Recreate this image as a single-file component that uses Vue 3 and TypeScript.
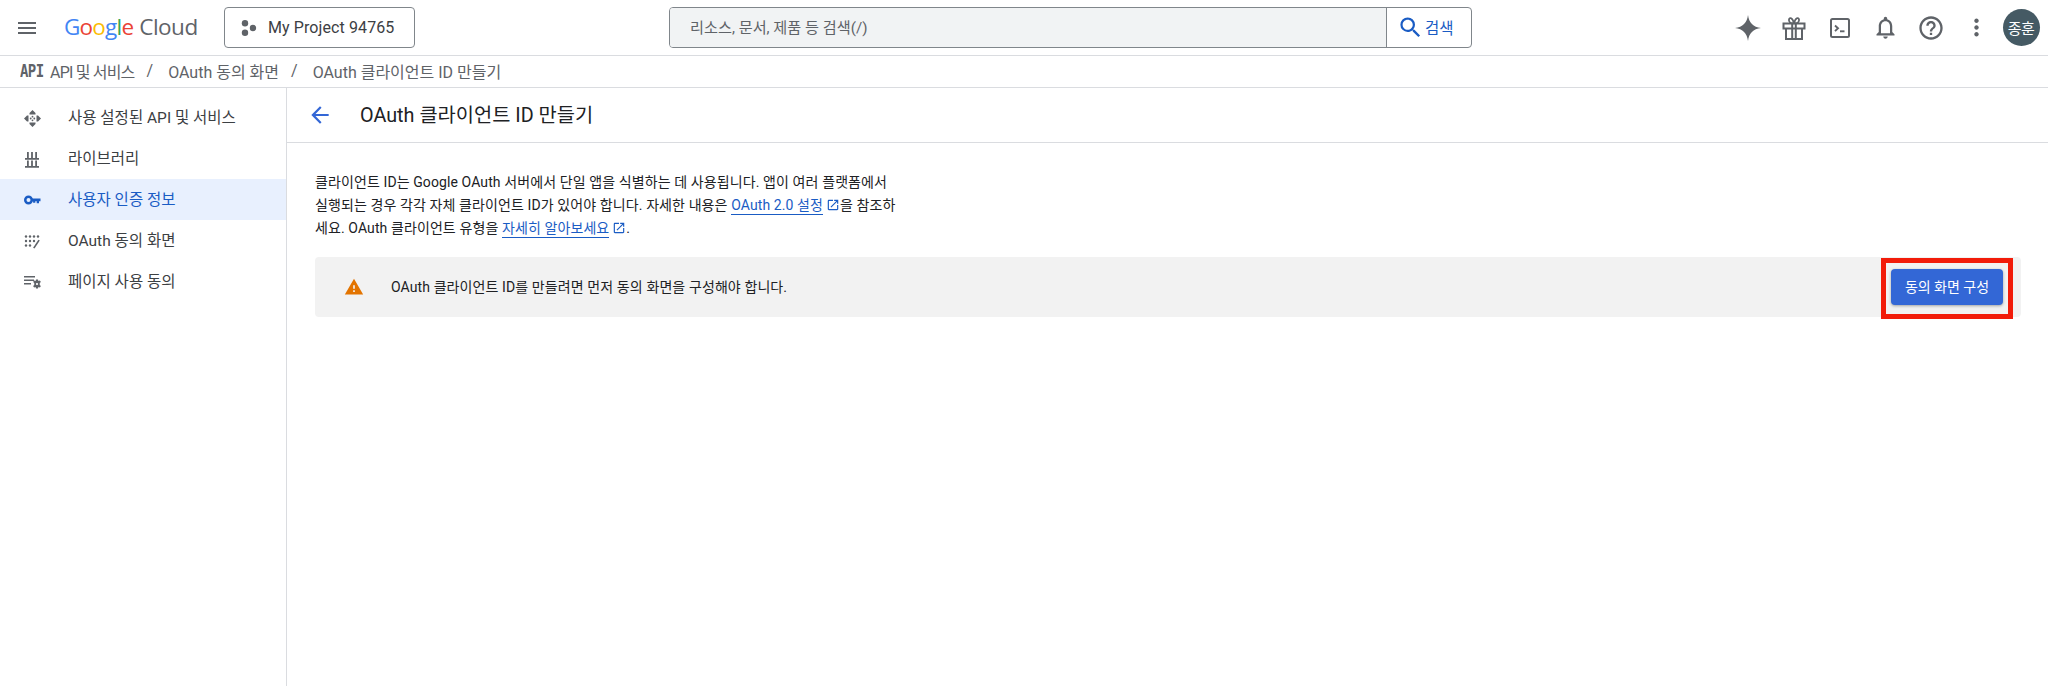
<template>
  <div class="page">
    <header class="topbar">
      <button class="icon-btn menu" aria-label="menu">
        <svg width="24" height="24" viewBox="0 0 24 24"><path d="M3 18h18v-2H3v2zm0-5h18v-2H3v2zm0-7v2h18V6H3z" fill="#5f6368"/></svg>
      </button>
      <div class="logo">
        <span class="g-blue">G</span><span class="g-red">o</span><span class="g-yellow">o</span><span class="g-blue">g</span><span class="g-green">l</span><span class="g-red">e</span>
        <span class="cloud">Cloud</span>
      </div>
      <button class="project">
        <svg width="18" height="18" viewBox="0 0 18 18" fill="#5f6368"><circle cx="5" cy="4.200" r="3.200"/><circle cx="5" cy="13.800" r="3.200"/><circle cx="13" cy="9" r="3.200"/></svg>
        <span>My Project 94765</span>
      </button>
      <div class="search">
        <div class="search__input">리소스, 문서, 제품 등 검색(/)</div>
        <div class="search__btn">
          <svg width="27" height="27" viewBox="0 0 24 24"><path d="M15.500 14h-.79l-.28-.27A6.470 6.470 0 0 0 16 9.500 6.500 6.500 0 1 0 9.500 16c1.610 0 3.090-.59 4.230-1.570l.27.28v.79l5 4.990L20.490 19l-4.990-5zm-6 0C7.010 14 5 11.990 5 9.500S7.010 5 9.500 5 14 7.010 14 9.500 11.990 14 9.500 14z" fill="#1a5cc4"/></svg>
          <span>검색</span>
        </div>
      </div>
      <div class="actions">
        <span class="slot">
          <svg width="30" height="30" viewBox="0 0 30 30"><path d="M15 2c1 7.800 5.200 12 13 13-7.800 1-12 5.200-13 13-1-7.800-5.200-12-13-13 7.800-1 12-5.200 13-13z" fill="#5f6368"/></svg>
        </span>
        <span class="slot">
          <svg width="26" height="26" viewBox="0 0 26 26" fill="none" stroke="#5f6368" stroke-width="2"><path d="M2.500 8.500h21v5h-21zM5 13.500V24h16V13.500M11.200 8.500V24M14.800 8.500V24"/><path d="M12.500 8.500C9.500 8.500 7.500 7 8 4.500c.5-2.300 3.500-2.500 5 4 1.500-6.500 4.500-6.300 5-4 .5 2.500-1.500 4-4.500 4" stroke-width="1.800"/></svg>
        </span>
        <span class="slot">
          <svg width="24" height="24" viewBox="0 0 24 24" fill="none" stroke="#5f6368" stroke-width="2"><rect x="3" y="3" width="18" height="18" rx="1.500"/><path d="M7 9.500 10 12.300 7 15.100" stroke-width="1.900"/><path d="M12 15.300h4.500" stroke-width="1.900"/></svg>
        </span>
        <span class="slot">
          <svg width="27" height="27" viewBox="0 0 24 24"><path d="M12 22c1.100 0 2-.9 2-2h-4c0 1.100.9 2 2 2zm6-6v-5c0-3.070-1.630-5.640-4.500-6.320V4c0-.83-.67-1.500-1.500-1.500s-1.500.67-1.500 1.500v.68C7.640 5.360 6 7.920 6 11v5l-2 2v1h16v-1l-2-2zm-2 1H8v-6c0-2.480 1.510-4.500 4-4.500s4 2.020 4 4.500v6z" fill="#5f6368"/></svg>
        </span>
        <span class="slot">
          <svg width="28" height="28" viewBox="0 0 24 24"><path d="M11 18h2v-2h-2v2zm1-16C6.480 2 2 6.480 2 12s4.480 10 10 10 10-4.480 10-10S17.520 2 12 2zm0 18c-4.410 0-8-3.590-8-8s3.590-8 8-8 8 3.590 8 8-3.590 8-8 8zm0-14c-2.210 0-4 1.790-4 4h2c0-1.100.9-2 2-2s2 .9 2 2c0 2-3 1.750-3 5h2c0-2.250 3-2.500 3-5 0-2.210-1.790-4-4-4z" fill="#5f6368"/></svg>
        </span>
        <span class="slot">
          <svg width="27" height="27" viewBox="0 0 24 24"><path d="M12 8c1.100 0 2-.9 2-2s-.9-2-2-2-2 .9-2 2 .9 2 2 2zm0 2c-1.100 0-2 .9-2 2s.9 2 2 2 2-.9 2-2-.9-2-2-2zm0 6c-1.100 0-2 .9-2 2s.9 2 2 2 2-.9 2-2-.9-2-2-2z" fill="#5f6368"/></svg>
        </span>
        <div class="avatar">종훈</div>
      </div>
    </header>

    <nav class="crumbs">
      <span class="crumbs__api">API</span>
      <span class="crumbs__first">API 및 서비스</span>
      <span class="crumbs__sep">/</span>
      <span>OAuth 동의 화면</span>
      <span class="crumbs__sep">/</span>
      <span>OAuth 클라이언트 ID 만들기</span>
    </nav>

    <div class="body">
      <aside class="side">
        <a v-for="item in navItems" :key="item.label" class="side__item" :class="{ 'side__item--active': item.active }">
          <svg class="side__icon" width="24" height="24" viewBox="0 0 24 24" v-html="item.icon"></svg>
          <span>{{ item.label }}</span>
        </a>
      </aside>

      <main class="main">
        <div class="title-row">
          <svg class="back" width="26" height="26" viewBox="0 0 24 24"><path d="M20 11H7.830l5.590-5.590L12 4l-8 8 8 8 1.410-1.410L7.830 13H20v-2z" fill="#3367d6"/></svg>
          <h1>OAuth 클라이언트 ID 만들기</h1>
        </div>
        <div class="content">
          <p class="intro">
            클라이언트 ID는 Google OAuth 서버에서 단일 앱을 식별하는 데 사용됩니다. 앱이 여러 플랫폼에서<br>
            실행되는 경우 각각 자체 클라이언트 ID가 있어야 합니다. 자세한 내용은 <a>OAuth 2.0 설정</a><svg class="ext" width="14" height="14" viewBox="0 0 24 24"><path :d="extPath" fill="#1a5cc4"/></svg>을 참조하<br>
            세요. OAuth 클라이언트 유형을 <a>자세히 알아보세요</a><svg class="ext" width="14" height="14" viewBox="0 0 24 24"><path :d="extPath" fill="#1a5cc4"/></svg>.
          </p>
          <div class="notice">
            <svg class="notice__icon" width="20" height="20" viewBox="0 0 24 24"><path d="M1 21h22L12 2 1 21zm12-3h-2v-2h2v2zm0-4h-2v-4h2v4z" fill="#e37400"/></svg>
            <span class="notice__text">OAuth 클라이언트 ID를 만들려면 먼저 동의 화면을 구성해야 합니다.</span>
            <div class="highlight">
              <button class="primary">동의 화면 구성</button>
            </div>
          </div>
        </div>
      </main>
    </div>
  </div>
</template>

<script setup lang="ts">
interface NavItem {
  label: string
  icon: string
  active?: boolean
}

const extPath = 'M19 19H5V5h7V3H5c-1.110 0-2 .9-2 2v14c0 1.100.89 2 2 2h14c1.100 0 2-.9 2-2v-7h-2v7zM14 3v2h3.590l-9.830 9.830 1.410 1.410L19 6.410V10h2V3h-7z'

const navItems: NavItem[] = [
  {
    label: '사용 설정된 API 및 서비스',
    icon: '<g fill="#5f6368"><path d="M12.500 4 15.500 7 15.500 8.500H9.500V7zM12.500 21 9.500 18V16.500H15.500V18zM4 12.500 7 9.500H8.500V15.500H7zM21 12.500 18 15.500H16.500V9.500H18z"/><circle cx="12.500" cy="10.700" r=".9"/><circle cx="12.500" cy="14.300" r=".9"/><circle cx="10.700" cy="12.500" r=".9"/><circle cx="14.300" cy="12.500" r=".9"/></g>',
  },
  {
    label: '라이브러리',
    icon: '<path d="M7 5h1.800v6H7zM11.100 5h1.800v6h-1.800zM15.200 5H17v6h-1.800zM5 11h14v1.700H5zM7 13.500h1.800V19H7zM11.100 13.500h1.800V19h-1.800zM15.200 13.500H17V19h-1.800zM5 19h14v1.700H5z" fill="#5f6368"/>',
  },
  {
    label: '사용자 인증 정보',
    active: true,
    icon: '<g fill="#1a5cc4"><path fill-rule="evenodd" d="M8.500 7.500a4.500 4.500 0 1 0 0 9 4.500 4.500 0 0 0 0-9zm0 2.500a2 2 0 1 1 0 4 2 2 0 0 1 0-4z"/><path d="M12 10.500h8.500v2.700H19v2h-2.300v-2H15.300v1.500h-2.200v-1.500H12z"/></g>',
  },
  {
    label: 'OAuth 동의 화면',
    icon: '<g fill="#5f6368"><circle cx="6" cy="7.500" r="1.200"/><circle cx="10" cy="7.500" r="1.200"/><circle cx="14" cy="7.500" r="1.200"/><circle cx="18" cy="7.500" r="1.200"/><circle cx="6" cy="12" r="1.200"/><circle cx="10" cy="12" r="1.200"/><circle cx="14" cy="12" r="1.200"/><circle cx="6" cy="16.500" r="1.200"/><circle cx="10" cy="16.500" r="1.200"/><path d="M18.400 10.800 19.800 11.600 14.500 19.500 13.100 18.700z"/></g>',
  },
  {
    label: '페이지 사용 동의',
    icon: '<g fill="#5f6368"><path d="M4 6h11v1.600H4zM4 9.500h10v1.600H4zM4 13h7v1.600H4z"/><path fill-rule="evenodd" d="M16 9.500h2l.4 1.500 1.500-.6 1 1.700-1.200 1 .1.900-.1.900 1.200 1-1 1.700-1.500-.6-.4 1.500h-2l-.4-1.500-1.500.6-1-1.700 1.200-1-.1-.9.1-.9-1.200-1 1-1.700 1.500.6zM17 12.900a1.100 1.100 0 1 0 0 2.200 1.100 1.100 0 0 0 0-2.200z"/></g>',
  },
]
</script>

<style>
html, body {
  margin: 0;
  background: #fff;
}
</style>

<style scoped>
.page {
  width: 2048px;
  height: 686px;
  overflow: hidden;
  display: flex;
  flex-direction: column;
  font-family: Roboto, "Noto Sans CJK KR", sans-serif;
  font-size: 14px;
  color: #202124;
}

.topbar {
  height: 56px;
  box-sizing: border-box;
  border-bottom: 1px solid #dadce0;
  display: flex;
  align-items: center;
  flex: none;
  padding-left: 15px;
}
.icon-btn {
  border: 0;
  background: none;
  padding: 0;
  width: 24px;
  height: 24px;
}
.logo {
  margin-left: 25px;
  width: 160px;
  padding-bottom: 3px;
  font-family: "Open Sans", Roboto, sans-serif;
  font-size: 22.5px;
  letter-spacing: -0.8px;
  color: #5f6368;
  white-space: pre-line;
  display: flex;
}
.cloud { margin-left: 6px; letter-spacing: -0.5px; }
.g-blue { color: #4285f4; }
.g-red { color: #ea4335; }
.g-yellow { color: #fbbc04; }
.g-green { color: #34a853; }

.project {
  width: 191px;
  height: 41px;
  box-sizing: border-box;
  border: 1px solid #80868b;
  border-radius: 4px;
  background: #fff;
  display: flex;
  align-items: center;
  gap: 10px;
  padding: 0 0 0 15px;
  font: inherit;
  font-size: 16px;
  letter-spacing: 0.1px;
  color: #3c4043;
}
.search {
  margin-left: 254px;
  width: 803px;
  height: 41px;
  box-sizing: border-box;
  border: 1px solid #80868b;
  border-radius: 4px;
  display: flex;
  overflow: hidden;
}
.search__input {
  flex: 1;
  background: #f1f3f4;
  padding: 0 0 3px 20px;
  display: flex;
  align-items: center;
  color: #5f6368;
  font-size: 15.2px;
  border-right: 1px solid #80868b;
}
.search__btn {
  width: 84px;
  display: flex;
  align-items: center;
  padding-left: 10px;
  box-sizing: border-box;
  gap: 1px;
  color: #1a5cc4;
  font-size: 15.5px;
}
.search__btn span { padding-bottom: 2px; }
.actions {
  margin-left: auto;
  display: flex;
  align-items: center;
  padding-right: 8.5px;
}
.slot {
  width: 45.7px;
  display: flex;
  justify-content: center;
  align-items: center;
}
.avatar {
  width: 37px;
  height: 37px;
  margin-left: 3px;
  border-radius: 50%;
  background: #455a64;
  color: #fff;
  font-size: 15px;
  letter-spacing: -0.5px;
  display: flex;
  align-items: center;
  justify-content: center;
}

.crumbs {
  height: 32px;
  flex: none;
  box-sizing: border-box;
  border-bottom: 1px solid #dadce0;
  display: flex;
  align-items: center;
  padding: 0 0 2px 20px;
  color: #5f6368;
  font-size: 16px;
}
.crumbs__api {
  font-family: "DejaVu Sans Mono", monospace;
  font-weight: 700;
  font-size: 14px;
  width: 23px;
  margin-right: 7px;
  letter-spacing: -0.6px;
  transform: scaleY(1.2);
}
.crumbs__first { letter-spacing: -0.8px; }
.crumbs__sep { margin: 0 15px 0 12px; }

.body {
  flex: 1;
  display: flex;
  min-height: 0;
}
.side {
  width: 287px;
  flex: none;
  box-sizing: border-box;
  border-right: 1px solid #dadce0;
  padding-top: 9px;
}
.side__item {
  height: 41px;
  display: flex;
  align-items: center;
  padding-left: 20px;
  gap: 24px;
  color: #3c4043;
  font-size: 15.5px;
}
.side__item span { padding-bottom: 3px; }
.side__item--active {
  background: #e8f0fe;
  color: #1a5cc4;
}
.side__icon { flex: none; }

.main { flex: 1; min-width: 0; }
.title-row {
  height: 55px;
  box-sizing: border-box;
  border-bottom: 1px solid #dadce0;
  display: flex;
  align-items: center;
  padding-left: 20px;
}
.back { margin-right: 27px; }
h1 {
  margin: 0;
  font-size: 19.8px;
  font-weight: 400;
  color: #202124;
  padding-bottom: 3px;
}
.content { padding: 28px 27px 0 28px; }
.intro {
  margin: 0;
  white-space: nowrap;
  line-height: 23px;
  letter-spacing: 0.1px;
  color: #202124;
}
.intro a {
  color: #1a5cc4;
  border-bottom: 1px solid #1a5cc4;
  padding-bottom: 1px;
}
.ext {
  margin: 0 0 0 3px;
  vertical-align: -2px;
}
.notice {
  margin-top: 17px;
  height: 60px;
  background: #f2f2f2;
  border-radius: 4px;
  display: flex;
  align-items: center;
  padding-left: 29px;
}
.notice__icon { margin-right: 27px; }
.notice__text { flex: 1; padding-bottom: 3px; letter-spacing: 0.1px; }
.highlight {
  width: 132px;
  height: 61px;
  margin: 3px 8px 0 0;
  padding-bottom: 4px;
  box-sizing: border-box;
  border: 5px solid #f21c0a;
  display: flex;
  align-items: center;
  justify-content: center;
}
.primary {
  width: 112px;
  height: 36px;
  border: 0;
  border-radius: 4px;
  background: #3367d6;
  color: #fff;
  font: inherit;
  font-size: 14px;
  padding: 0 0 2px;
  box-shadow: 0 1px 3px rgba(60, 64, 67, 0.45);
}
</style>
